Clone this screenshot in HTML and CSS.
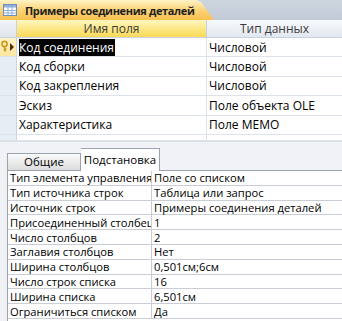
FILE: index.html
```html
<!DOCTYPE html>
<html>
<head>
<meta charset="utf-8">
<link rel="stylesheet" href="styles.css">
</head>
<body>
<div class="app">
  <div class="tabbar">
    <div class="doctab">
      <svg class="tblicon" width="14" height="12" viewBox="0 0 14 12">
        <rect x="0.5" y="0.5" width="13" height="11" fill="#fff" stroke="#6d8fbf"/>
        <rect x="1" y="1" width="12" height="2.5" fill="#8fb0dc"/>
        <path d="M1 6.5H13M1 9H13M5 1V11M9 1V11" stroke="#8fb0dc" stroke-width="1"/>
      </svg>
      <span class="doctitle">Примеры соединения деталей</span>
    </div>
  </div>
  <div class="grid">
    <div class="hrow">
      <div class="sel hsel"></div>
      <div class="hcell name active">Имя поля</div>
      <div class="hcell type">Тип данных</div>
    </div>
    <div class="row">
      <div class="sel cur">
        <svg width="16" height="18" viewBox="0 0 16 18">
          <circle cx="4.5" cy="6" r="2.6" fill="none" stroke="#c99a1a" stroke-width="1.6"/>
          <path d="M4.5 8.5V13M4.5 11H6.5M4.5 13H6" stroke="#c99a1a" stroke-width="1.4" fill="none"/>
          <path d="M10 5L14 9L10 13Z" fill="#5a2a00"/>
        </svg>
      </div>
      <div class="cell name"><span class="hl">Код соединения</span></div>
      <div class="cell type">Числовой</div>
    </div>
    <div class="row"><div class="sel"></div><div class="cell name">Код сборки</div><div class="cell type">Числовой</div></div>
    <div class="row"><div class="sel"></div><div class="cell name">Код закрепления</div><div class="cell type">Числовой</div></div>
    <div class="row"><div class="sel"></div><div class="cell name">Эскиз</div><div class="cell type">Поле объекта OLE</div></div>
    <div class="row"><div class="sel"></div><div class="cell name">Характеристика</div><div class="cell type">Поле MEMO</div></div>
    <div class="row short"><div class="sel"></div><div class="cell name"></div><div class="cell type"></div></div>
  </div>
  <div class="props">
    <div class="ptabs">
      <div class="ptab">Общие</div>
      <div class="ptab on">Подстановка</div>
    </div>
    <div class="ptable">
      <div class="prow"><div class="pl">Тип элемента управления</div><div class="pv">Поле со списком</div></div>
      <div class="prow"><div class="pl">Тип источника строк</div><div class="pv">Таблица или запрос</div></div>
      <div class="prow"><div class="pl">Источник строк</div><div class="pv">Примеры соединения деталей</div></div>
      <div class="prow"><div class="pl">Присоединенный столбец</div><div class="pv">1</div></div>
      <div class="prow"><div class="pl">Число столбцов</div><div class="pv">2</div></div>
      <div class="prow"><div class="pl">Заглавия столбцов</div><div class="pv">Нет</div></div>
      <div class="prow"><div class="pl">Ширина столбцов</div><div class="pv">0,501см;6см</div></div>
      <div class="prow"><div class="pl">Число строк списка</div><div class="pv">16</div></div>
      <div class="prow"><div class="pl">Ширина списка</div><div class="pv">6,501см</div></div>
      <div class="prow"><div class="pl">Ограничиться списком</div><div class="pv">Да</div></div>
    </div>
  </div>
</div>
</body>
</html>
```

FILE: styles.css
```css
* { box-sizing: border-box; }
html, body { margin: 0; padding: 0; }
body {
  width: 342px;
  height: 321px;
  overflow: hidden;
  font-family: "Open Sans", "DejaVu Sans", sans-serif;
  font-size: 12px;
  color: #000;
  background: #fff;
}
.app { width: 342px; height: 321px; display: flex; flex-direction: column; }

.tabbar {
  height: 20px;
  background: linear-gradient(#cdd5df, #c1cad6);
  display: flex;
  align-items: flex-end;
}
.doctab {
  width: 214px;
  height: 20px;
  display: flex;
  align-items: center;
  gap: 8px;
  padding-left: 3px;
  background: linear-gradient(#fff3c6 0%, #fcd67e 45%, #f8c04e 100%);
  clip-path: polygon(0 0, 196px 0, 201px 2px, 214px 20px, 0 20px);
}
.tblicon { flex: none; }
.doctitle { font-weight: bold; font-size: 11px; letter-spacing: -0.35px; color: #1e1e1e; white-space: nowrap; }

.grid { display: flex; flex-direction: column; }
.hrow { display: flex; height: 18px; border-bottom: 1px solid #c9d3e0; }
.sel {
  width: 17px;
  flex: none;
  background: #e7edf5;
  border-right: 1px solid #c9d3e0;
}
.hsel { background: linear-gradient(#f2f5f9, #dfe5ed); }
.sel.cur { background: linear-gradient(#fff2c8, #fde6a0); display: flex; align-items: center; }
.hcell {
  display: flex; align-items: center; justify-content: center;
  color: #3b3b3b;
  border-right: 1px solid #c9d3e0;
}
.hcell.name.active { background: linear-gradient(#fff7c0, #fde57c 60%, #fbd95a); }
.hcell.type { background: linear-gradient(#f7f9fb, #e2e8ef); border-right: none; }
.name { width: 190px; flex: none; }
.type { flex: 1; }
.row { display: flex; height: 19.4px; border-bottom: 1px solid #dde3ea; }
.row.short { height: 5px; border-bottom: none; }
.cell {
  display: flex; align-items: center;
  padding-left: 2px;
  border-right: 1px solid #dde3ea;
  white-space: nowrap;
  overflow: hidden;
}
.cell.type { border-right: none; }
.hl { background: #000; color: #fff; padding-right: 1px; }

.props {
  flex: 1;
  background: #f0f2f5;
  border-top: 2px solid #dbe1e9;
  display: flex;
  flex-direction: column;
  padding: 5px 0 0 7px;
}
.ptabs { display: flex; align-items: flex-end; height: 23px; }
.ptab {
  height: 17px;
  width: 74px;
  display: flex; align-items: center; justify-content: center;
  background: linear-gradient(#fafafa, #dcdcdc);
  border: 1px solid #9aa3ae;
  border-bottom: none;
  font-size: 11.5px;
}
.ptab.on {
  height: 23px;
  width: 79px;
  background: #fff;
  border-left: none;
  position: relative;
  top: 1px;
}
.ptable {
  flex: 1;
  background: #fff;
  border-top: 1px solid #9aa3ae;
  border-left: 1px solid #9aa3ae;
}
.prow { display: flex; height: 14.8px; border-bottom: 1px solid #c9ced6; font-size: 11.2px; }
.pl {
  width: 144px; flex: none;
  padding-left: 2px;
  border-right: 1px solid #c9ced6;
  white-space: nowrap; overflow: hidden;
  display: flex; align-items: center;
}
.pv { padding-left: 2px; display: flex; align-items: center; white-space: nowrap; }
```
